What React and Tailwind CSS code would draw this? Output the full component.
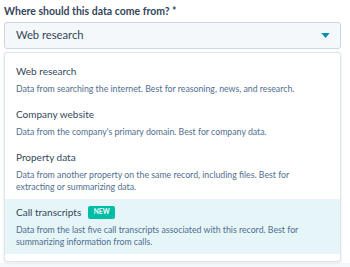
import React from "react";

const options = [
  {
    title: "Web research",
    desc: "Data from searching the internet. Best for reasoning, news, and research.",
  },
  {
    title: "Company website",
    desc: "Data from the company's primary domain. Best for company data.",
  },
  {
    title: "Property data",
    desc: "Data from another property on the same record, including files. Best for extracting or summarizing data.",
  },
  {
    title: "Call transcripts",
    desc: "Data from the last five call transcripts associated with this record. Best for summarizing information from calls.",
    isNew: true,
    active: true,
  },
];

const App = () => {
  return (
    <div
      className="h-[267px] w-[350px] overflow-hidden bg-[#f5f8fa]"
      style={{ fontFamily: "Lato, sans-serif" }}
    >
      <div className="bg-white px-1 pt-[3px] pb-[1px]">
        <label className="block text-[10.5px] font-bold leading-[16px] text-[#33475b]">
          Where should this data come from? *
        </label>
        <div className="mt-[3px] flex h-[27px] w-[337px] items-center justify-between rounded-[3px] border border-[#cbd6e2] bg-[#f5f8fa] pl-[11px] pr-[10px]">
          <span className="text-[11.2px] text-[#33475b]">Web research</span>
          <svg width="9" height="5" viewBox="0 0 10 6">
            <path d="M0 0 L10 0 L5 6 Z" fill="#0091ae" />
          </svg>
        </div>
        <div className="mt-[3px] w-[337px] rounded-[3px] border border-[#dfe3eb] bg-white pt-[5px] pb-[7px] shadow-[0_1px_3px_rgba(45,62,80,0.12)]">
          {options.map((o) => (
            <div
              key={o.title}
              className={
                o.active
                  ? "bg-[#e5f5f8] px-[11px] pt-1 pb-[6px]"
                  : "px-[11px] pt-1 pb-[6px]"
              }
            >
              <div className="flex items-center gap-[7px] text-[10px] leading-[18px] text-[#33475b]">
                {o.title}
                {o.isNew && (
                  <span className="flex h-[13px] w-[27px] items-center justify-center rounded-[2px] bg-[#00bda5] text-[6.5px] font-bold tracking-wide text-white">
                    NEW
                  </span>
                )}
              </div>
              <p className="mt-[3px] text-[8.75px] leading-[12px] text-[#516f90]">
                {o.desc}
              </p>
            </div>
          ))}
        </div>
      </div>
    </div>
  );
};

export default App;
